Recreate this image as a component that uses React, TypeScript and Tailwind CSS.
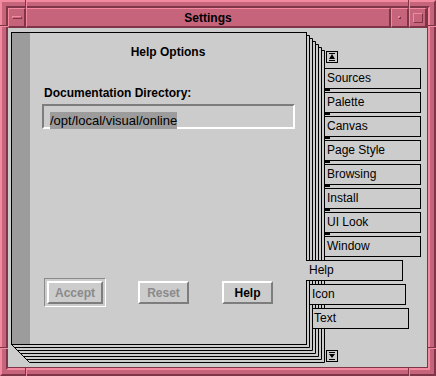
import React from 'react';

const beforeTabs = ['Sources', 'Palette', 'Canvas', 'Page Style', 'Browsing', 'Install', 'UI Look', 'Window'];

function ScrollButton({ down }: { down?: boolean }) {
  return (
    <div className="ml-[19px] w-[12px] h-[12px] border border-black flex items-center justify-center">
      <svg width="10" height="10" viewBox="0 0 10 10">
        <rect x="2" y="1" width="6" height="1" fill="#000" />
        {down ? <polygon points="2,3 8,3 5,7" fill="#000" /> : <polygon points="5,2 8,7 2,7" fill="#000" />}
        <rect x="2" y="8" width="6" height="1" fill="#000" />
      </svg>
    </div>
  );
}

// back pages of the notebook, drawn in window coordinates
function PageStack() {
  const lines = [1, 2, 3, 4, 5, 6].map((k) => {
    const xr = 306 + 3 * k;
    const yt = 32 + 3 * k;
    const yb = 344 + 3 * k;
    const xl = 11 + 3 * k;
    return `M${xr - 3 + 0.5} ${yt + 0.5}H${xr + 0.5}V${yb + 0.5}H${xl + 0.5}`;
  });
  return (
    <svg className="absolute inset-0 z-0" width="419" height="339">
      <g transform="translate(-8 -28)" fill="none" stroke="#000" strokeWidth="1">
        {lines.map((d, i) => (
          <path key={i} d={d} />
        ))}
        <path d="M11.5 344.5L29.5 362.5" />
        {beforeTabs.slice(0, 7).map((_, i) => (
          <rect key={i} x="324" y={89 + 24 * i} width="6" height="2" fill="#000" stroke="none" />
        ))}
      </g>
    </svg>
  );
}

export default function App() {
  return (
    <div className="relative w-[436px] h-[376px] bg-[#c6647c] border-2 border-t-[#f28aa0] border-l-[#f28aa0] border-b-[#7d3547] border-r-[#7d3547] p-[4px] font-['Liberation_Sans',Arial,sans-serif] text-black">
      {/* frame corner cuts */}
      <div className="absolute left-[23px] top-[-2px] w-[2px] h-[8px] border-l border-[#7d3547] bg-[#f28aa0]" />
      <div className="absolute left-[406px] top-[-2px] w-[2px] h-[8px] border-l border-[#7d3547] bg-[#f28aa0]" />
      <div className="absolute left-[23px] top-[366px] w-[2px] h-[8px] border-l border-[#7d3547] bg-[#f28aa0]" />
      <div className="absolute left-[406px] top-[366px] w-[2px] h-[8px] border-l border-[#7d3547] bg-[#f28aa0]" />
      <div className="absolute left-[-2px] top-[23px] w-[8px] h-[2px] border-t border-[#7d3547] bg-[#f28aa0]" />
      <div className="absolute left-[-2px] top-[345px] w-[8px] h-[2px] border-t border-[#7d3547] bg-[#f28aa0]" />
      <div className="absolute left-[426px] top-[23px] w-[8px] h-[2px] border-t border-[#7d3547] bg-[#f28aa0]" />
      <div className="absolute left-[426px] top-[345px] w-[8px] h-[2px] border-t border-[#7d3547] bg-[#f28aa0]" />

      <div className="w-full h-full border-2 border-t-[#7d3547] border-l-[#7d3547] border-b-[#f28aa0] border-r-[#f28aa0]">
        <div className="w-full h-full flex flex-col border-r border-b border-[#7d3547]">
          {/* title bar */}
          <div className="flex h-[20px] shrink-0">
            <div className="w-[18px] border-t border-l border-[#f28aa0] border-b-2 border-r-2 border-b-[#7d3547] border-r-[#7d3547] flex items-center justify-center">
              <div className="w-[10px] h-[3px] border-t border-l border-[#f28aa0] border-b border-r border-b-[#7d3547] border-r-[#7d3547]" />
            </div>
            <div className="flex-1 border-t border-l border-[#f28aa0] border-b-2 border-r-2 border-b-[#7d3547] border-r-[#7d3547] flex items-center justify-center text-[12px] font-bold leading-none">
              Settings
            </div>
            <div className="w-[18px] border-t border-l border-[#f28aa0] border-b-2 border-r-2 border-b-[#7d3547] border-r-[#7d3547] flex items-center justify-center">
              <div className="w-[3px] h-[3px] border-t border-l border-[#f28aa0] border-b border-r border-b-[#7d3547] border-r-[#7d3547]" />
            </div>
            <div className="w-[18px] border-t border-l border-[#f28aa0] border-b-2 border-r-2 border-b-[#7d3547] border-r-[#7d3547] flex items-center justify-center">
              <div className="w-[10px] h-[10px] border-t border-l border-[#f28aa0] border-b border-r border-b-[#7d3547] border-r-[#7d3547]" />
            </div>
          </div>

          {/* notebook */}
          <div className="relative isolate flex-1 bg-[#cccccc] pl-[3px] pt-[4px]">
            <PageStack />
            <div className="relative z-10 flex items-start">
              {/* page */}
              <div className="w-[296px] h-[313px] border border-black bg-[#cccccc] flex">
                <div className="w-[18px] bg-[#9c9c9c]" />
                <div className="flex-1 flex flex-col">
                  <div className="mt-[12px] text-center text-[12px] font-bold leading-[14px]">Help Options</div>
                  <div className="ml-[14px] mt-[27px] text-[12px] font-bold leading-[14px]">Documentation Directory:</div>
                  <div className="ml-[12px] mt-[4px] w-[253px] h-[25px] border-2 border-t-[#7d7d7d] border-l-[#7d7d7d] border-b-white border-r-white pl-[6px] pt-[2px]">
                    <span className="inline-block bg-[#9c9c9c] text-[13px] leading-[17px]">/opt/local/visual/online</span>
                  </div>
                  <div className="mt-[149px] ml-[14px] flex items-center text-[12px] font-bold">
                    <div className="w-[62px] h-[29px] border border-t-[#8a8a8a] border-l-[#8a8a8a] border-b-white border-r-white p-[2px]">
                      <div className="w-full h-full border-2 border-t-white border-l-white border-b-[#7d7d7d] border-r-[#7d7d7d] flex items-center justify-center text-[#8a8a8a]">
                        Accept
                      </div>
                    </div>
                    <div className="ml-[32px] w-[51px] h-[23px] border-2 border-t-white border-l-white border-b-[#7d7d7d] border-r-[#7d7d7d] flex items-center justify-center text-[#8a8a8a]">
                      Reset
                    </div>
                    <div className="ml-[33px] w-[51px] h-[23px] border-2 border-t-white border-l-white border-b-[#7d7d7d] border-r-[#7d7d7d] flex items-center justify-center">
                      Help
                    </div>
                  </div>
                </div>
              </div>

              {/* tabs */}
              <div className="flex flex-col text-[12px] leading-[19px]">
                <div className="mt-[19px]">
                  <ScrollButton />
                </div>
                {beforeTabs.map((t, i) => (
                  <div key={t} className={`${i === 0 ? 'mt-[5px]' : 'mt-[3px]'} ml-[17px] w-[97px] h-[21px] border border-black bg-[#cccccc] pl-[2px]`}>
                    {t}
                  </div>
                ))}
                <div className="mt-[3px] -ml-px w-[97px] h-[21px] border-t border-r border-b border-black bg-[#cccccc] pl-[3px]">Help</div>
                <div className="mt-[3px] ml-[2px] w-[97px] h-[21px] border border-black bg-[#cccccc] pl-[2px]">Icon</div>
                <div className="mt-[3px] ml-[5px] w-[97px] h-[21px] border border-black bg-[#cccccc] pl-[1px]">Text</div>
                <div className="mt-[21px]">
                  <ScrollButton down />
                </div>
              </div>
            </div>
          </div>
        </div>
      </div>
    </div>
  );
}
